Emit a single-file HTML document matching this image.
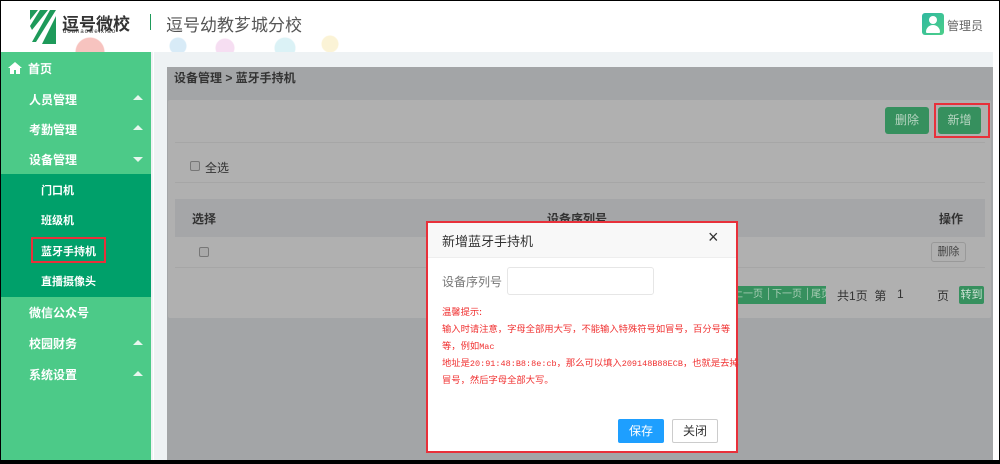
<!DOCTYPE html>
<html><head><meta charset="utf-8"><style>
*{margin:0;padding:0;box-sizing:border-box}
body{width:1000px;height:464px;overflow:hidden;background:#000;font-family:"Liberation Sans","Noto Sans CJK SC",sans-serif;font-size:12px;position:relative}
.a{position:absolute}
.side div.i{position:absolute;left:28px;color:#fff;font-weight:bold;font-size:12px}
.tri{position:absolute;left:132px;width:0;height:0;border-left:5px solid transparent;border-right:5px solid transparent}
.up{border-bottom:5px solid #e8f6ee}
.dn{border-top:5px solid #e8f6ee}
.sub{position:absolute;left:40px;color:#fff;font-weight:bold;font-size:11px}
.cb{position:absolute;width:10px;height:10px;border:1px solid #777;border-radius:2px;background:#a9a9a9}
.gb{position:absolute;background:#36905e;color:#b9d6c3;text-align:center;border-radius:3px}
.tip{position:absolute;left:442px;font-size:9.3px;line-height:17px;color:#f03030;white-space:nowrap;font-family:"Noto Sans CJK SC",sans-serif}
.tip span{font-family:"Liberation Mono",monospace;font-size:8.5px}
</style></head><body>
<div class="a" style="left:1px;top:1px;width:998px;height:459px;background:#fff"></div>
<div class="a" style="left:1px;top:1px;width:992px;height:51px;background:#fff"></div>
<div class="a" style="left:60px;top:34px;width:290px;height:18px;background:radial-gradient(circle at 30px 18px,#f6b5b0 0 14px,transparent 15px),radial-gradient(circle at 118px 12px,#cfe7f6 0 8px,transparent 9px),radial-gradient(circle at 165px 14px,#f4d6ef 0 9px,transparent 10px),radial-gradient(circle at 225px 14px,#d3eff4 0 10px,transparent 11px),radial-gradient(circle at 270px 10px,#fbf1cc 0 8px,transparent 9px);opacity:.8"></div>
<svg class="a" style="left:28px;top:8px" width="30" height="36" viewBox="0 0 30 36"><path d="M2 2h8l-8 10zM12 2h8L4 22 2 18zM22 2h6L8 34H4zM28 8v28H14z" fill="#1e9a5a"/></svg>
<div class="a" style="left:62px;top:10px;font-size:17px;font-weight:bold;color:#333">逗号微校</div>
<div class="a" style="left:63px;top:29px;font-size:6px;color:#333;letter-spacing:1px">douhaoweixiao</div>
<div class="a" style="left:150px;top:14px;width:1px;height:16px;background:#1e9a5a"></div>
<div class="a" style="left:166px;top:11px;font-size:17px;color:#555">逗号幼教芗城分校</div>
<div class="a" style="left:922px;top:13px;width:22px;height:22px;border-radius:3px;background:linear-gradient(135deg,#2fb8a0,#4ccf8a)"></div>
<div class="a" style="left:929px;top:16px;width:8px;height:8px;border-radius:50%;background:#fff"></div>
<div class="a" style="left:926px;top:25px;width:14px;height:8px;border-radius:7px 7px 1px 1px;background:#fff"></div>
<div class="a" style="left:947px;top:17px;font-size:12px;color:#666">管理员</div>
<div class="a side" style="left:1px;top:52px;width:150px;height:408px;background:#4cca88">
<svg class="a" style="left:6px;top:9px" width="16" height="14" viewBox="0 0 16 14"><path d="M8 1L1 7h2v6h4V9h2v4h4V7h2z" fill="#fff"/></svg>
<div class="i" style="left:27px;top:8px">首页</div>
<div class="i" style="top:39px">人员管理</div><div class="tri up" style="top:43px"></div>
<div class="i" style="top:69px">考勤管理</div><div class="tri up" style="top:73px"></div>
<div class="i" style="top:99px">设备管理</div><div class="tri dn" style="top:105px"></div>
<div class="a" style="left:0;top:122px;width:150px;height:123px;background:#00a06a"></div>
<div class="sub" style="top:130px">门口机</div>
<div class="sub" style="top:160px">班级机</div>
<div class="a" style="left:30px;top:185px;width:75px;height:26px;border:2px solid #e8303a"></div>
<div class="sub" style="top:191px">蓝牙手持机</div>
<div class="sub" style="top:221px">直播摄像头</div>
<div class="i" style="top:252px">微信公众号</div>
<div class="i" style="top:283px">校园财务</div><div class="tri up" style="top:288px"></div>
<div class="i" style="top:314px">系统设置</div><div class="tri up" style="top:319px"></div>
</div>
<div class="a" style="left:151px;top:52px;width:842px;height:408px;background:#eef2f4"></div>
<div class="a" style="left:153px;top:52px;width:1px;height:408px;background:#fff"></div>
<div class="a" style="left:167px;top:67px;width:826px;height:393px;background:#a3a5a7"></div>
<div class="a" style="left:174px;top:69px;font-size:12px;font-weight:bold;color:#333">设备管理 &gt; 蓝牙手持机</div>
<div class="a" style="left:168px;top:100px;width:823px;height:218px;background:#b0b0b0;border-radius:2px"></div>
<div class="a" style="left:175px;top:142px;width:810px;height:1px;background:#a6a6a6"></div>
<div class="a" style="left:175px;top:182px;width:810px;height:1px;background:#a6a6a6"></div>
<div class="gb" style="left:885px;top:107px;width:44px;height:27px;line-height:27px">删除</div>
<div class="a" style="left:934px;top:103px;width:56px;height:35px;border:2px solid #e8303a"></div>
<div class="gb" style="left:938px;top:107px;width:43px;height:27px;line-height:27px">新增</div>
<div class="cb" style="left:190px;top:161px"></div>
<div class="a" style="left:205px;top:159px;font-size:12px;color:#333">全选</div>
<div class="a" style="left:175px;top:199px;width:810px;height:38px;background:#a5a6a8"></div>
<div class="a" style="left:192px;top:210px;font-size:12px;font-weight:bold;color:#333">选择</div>
<div class="a" style="left:547px;top:210px;font-size:12px;font-weight:bold;color:#333">设备序列号</div>
<div class="a" style="left:939px;top:210px;font-size:12px;font-weight:bold;color:#333">操作</div>
<div class="cb" style="left:199px;top:247px"></div>
<div class="a" style="left:931px;top:242px;width:35px;height:20px;border:1px solid #999;border-radius:3px;color:#444;text-align:center;line-height:18px;font-size:11px">删除</div>
<div class="a" style="left:175px;top:267px;width:810px;height:1px;background:#a6a6a6"></div>
<div class="a" style="left:733px;top:286px;width:93px;height:18px;background:#36905e;overflow:hidden;white-space:nowrap;color:#a9cdb5;font-size:10px;line-height:18px">上一页 │下一页 │尾页</div>
<div class="a" style="left:837px;top:287px;color:#333">共1页 &nbsp;第</div>
<div class="a" style="left:897px;top:287px;color:#333">1</div>
<div class="a" style="left:937px;top:287px;color:#333">页</div>
<div class="gb" style="left:959px;top:286px;width:25px;height:18px;line-height:18px;font-size:11px;border-radius:2px;color:#cfe3d6">转到</div>
<div class="a" style="left:426px;top:221px;width:312px;height:232px;border:2px solid #e8303a;background:#fff"></div>
<div class="a" style="left:428px;top:223px;width:308px;height:35px;background:#f8f8f8;border-bottom:1px solid #eee"></div>
<div class="a" style="left:442px;top:231px;font-size:13px;color:#333">新增蓝牙手持机</div>
<div class="a" style="left:708px;top:227px;font-size:18px;color:#333">×</div>
<div class="a" style="left:442px;top:273px;font-size:12px;color:#777">设备序列号</div>
<div class="a" style="left:507px;top:267px;width:147px;height:28px;border:1px solid #e6e6e6;border-radius:3px"></div>
<div class="tip" style="top:303px">温馨提示:</div>
<div class="tip" style="top:320px">输入时请注意，字母全部用大写，不能输入特殊符号如冒号，百分号等</div>
<div class="tip" style="top:337px">等，例如<span>Mac</span></div>
<div class="tip" style="top:354px">地址是<span>20:91:48:B8:8e:cb</span>，那么可以填入<span>209148B88ECB</span>，也就是去掉</div>
<div class="tip" style="top:371px">冒号，然后字母全部大写。</div>
<div class="a" style="left:618px;top:419px;width:46px;height:24px;background:#1e9fff;color:#fff;text-align:center;line-height:24px;border-radius:2px">保存</div>
<div class="a" style="left:672px;top:419px;width:46px;height:24px;border:1px solid #ccc;color:#333;text-align:center;line-height:22px;border-radius:2px">关闭</div>
</body></html>
